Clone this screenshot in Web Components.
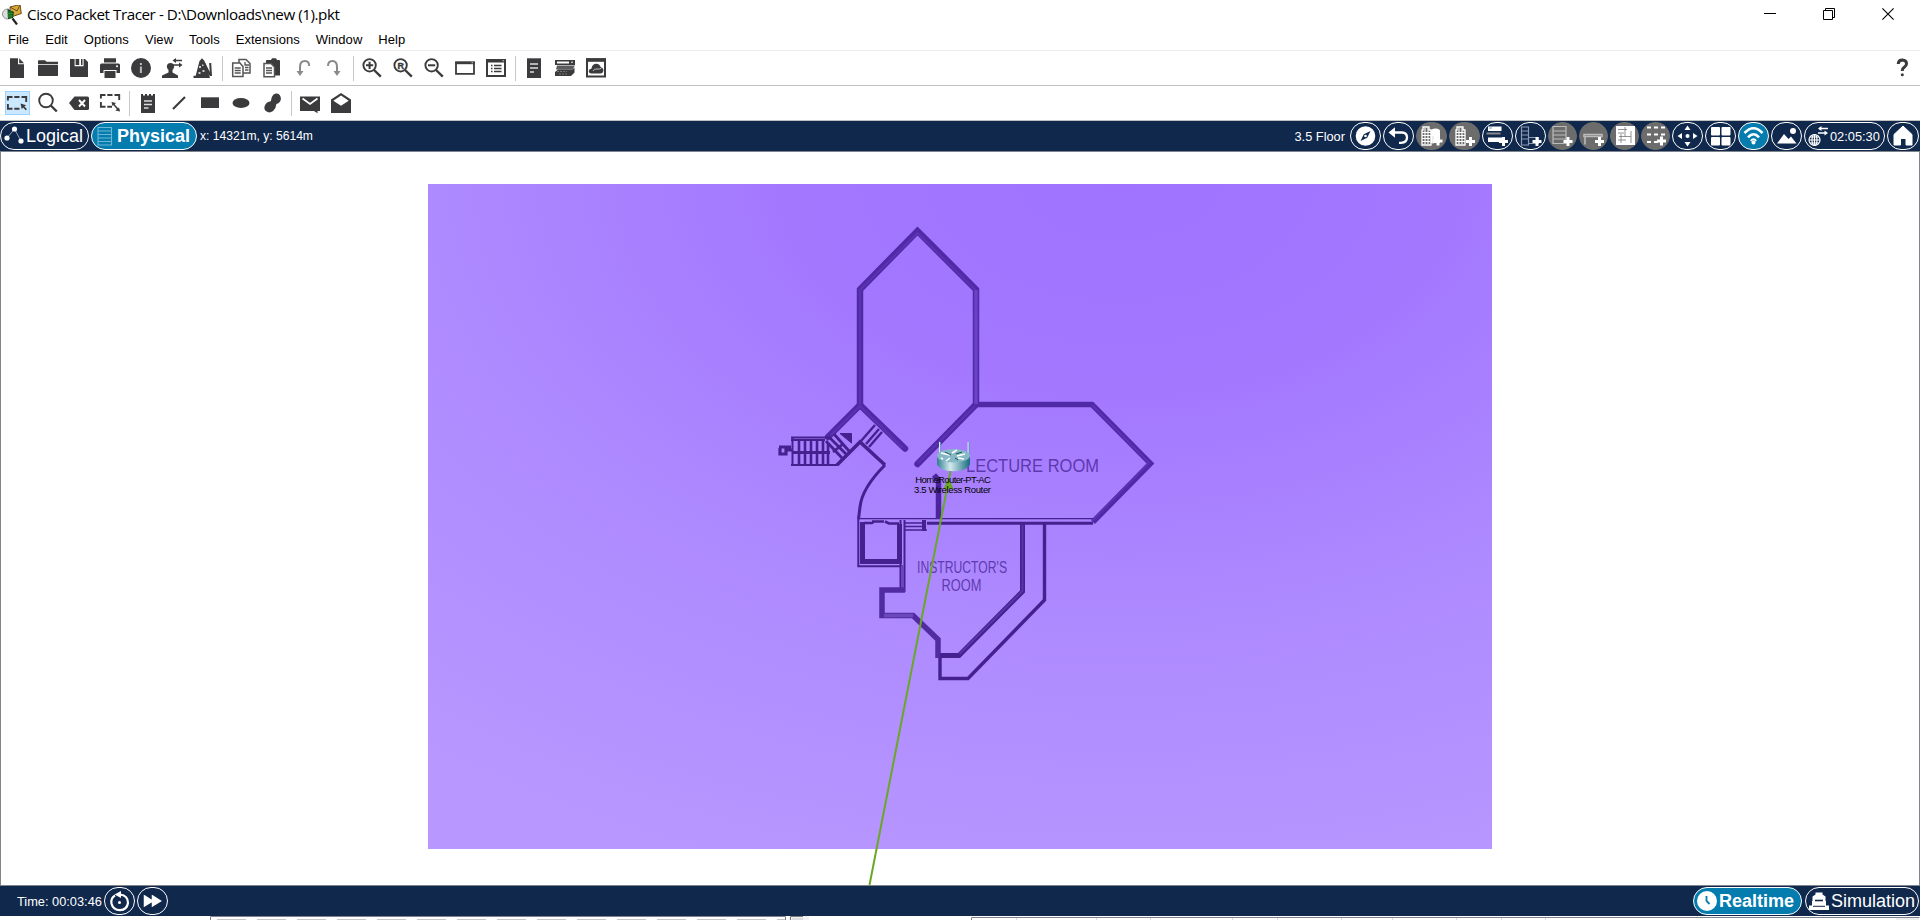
<!DOCTYPE html>
<html lang="en">
<head>
<meta charset="utf-8">
<title>Cisco Packet Tracer</title>
<style>
html, body { margin: 0; height: 100%; overflow: hidden; background: #fff; }
body { font-family: "Liberation Sans", Arial, sans-serif; }
</style>
</head>
<body>
<tracer-app></tracer-app>
<script>
const define = (name, css, html) => customElements.define(name, class extends HTMLElement {
  constructor() {
    super();
    const root = this.attachShadow({ mode: 'open' });
    const t = document.createElement('template');
    t.innerHTML = `<style>${css}</style>${typeof html === 'function' ? html(this) : html}`;
    root.append(t.content.cloneNode(true));
  }
});

/* 20x20 toolbar glyphs */
const K = '#3b3b3d';
const magnifier = inner => `<circle cx="7.6" cy="7.3" r="6.2" fill="none" stroke="${K}" stroke-width="1.9"/><path d="M12 12l6.8 6.6" stroke="${K}" stroke-width="2.4"/>${inner}`;
const ICONS = {
  new: `<path d="M3 .3h8v6h6V20H3z"/><path d="M12.2.3L17 5.2h-4.8z"/>`,
  open: `<path d="M0 3q0-.8.8-.8H7l1.6 1.6H20v2.4H0z"/><path d="M0 7h20v10.3q0 .7-.7.7H.7q-.7 0-.7-.7z"/>`,
  save: `<path d="M1 1h4.6v7.2h9V1H16l3 3v15H2q-1 0-1-1z"/><path d="M6.6 1h3.6v6H6.600zM12 1h1.500v6H12z"/>`,
  print: `<path d="M4 .3h12v4.300H4zM1.500 5.600h17q1.500 0 1.500 1.500V15h-3.500v-3h-13v3H0V7.100q0-1.500 1.500-1.500z"/><path d="M4.500 13h11v7h-11z"/><circle cx="17" cy="8.200" r="1" fill="#fff"/>`,
  info: `<circle cx="10" cy="10" r="10"/><path d="M8.900 8.500h2v6.500h-2zM8.900 5h2v2h-2z" fill="#bbb"/>`,
  user: `<circle cx="8.500" cy="8.500" r="3.600"/><path d="M0 20v-2.500l6.500-3V11h4v3.500l5.500 3V20z"/><path d="M12 2.500h8M11 7h7.500" stroke="${K}" stroke-width="1.400"/><path d="M10.500 2.500L14 0v5zM20.500 7L17 4.500v5z"/>`,
  cone: `<path d="M6.500 3L9 .3 11.500 3l5.500 17H.5v-2.300h2.200z"/><path d="M11.500 5.500l5.700 11.700M17.200 5l.8 13" stroke="${K}" stroke-width="2"/><path d="M6 8h2v2H6zM9 6.500h1.500V8H9zM9.500 12h2v2h-2zM5.500 14h2v2h-2z" fill="#ccc"/>`,
  copy: `<g fill="#fff" stroke="#555" stroke-width="1.500"><path d="M8 1.500h7l4 4V15H8z"/><path d="M1.700 5h7.300l3 3.500v10H1.700z"/></g><path d="M3.700 10h6M3.700 12.500h6M3.700 15h6M14 4v3h4M14 9.500h3.500M14 12h3.500" stroke="#555" stroke-width="1.300" fill="none"/>`,
  paste: `<path d="M4 3q0-1 1-1h4l1-1.700h4L15 2h2q1 0 1 1v14.500H4z"/><path d="M2 5.500h7l3.500 3.500v9.800H2z" fill="#fff" stroke="#555" stroke-width="1.500"/><path d="M4 10h6M4 12.500h6M4 15h6" stroke="#555" stroke-width="1.300"/>`,
  undo: `<path d="M16.200 8q0-5-4.300-5Q7 3 7 9v7" fill="none" stroke="#8a8a8a" stroke-width="2"/><path d="M3.500 13h7L7 18z" fill="#8a8a8a"/>`,
  redo: `<path d="M4 8q0-5 4.300-5Q13 3 13 9v7" fill="none" stroke="#8a8a8a" stroke-width="2"/><path d="M9.500 13h7L13 18z" fill="#8a8a8a"/>`,
  zin: magnifier(`<path d="M4 7.300h7.200M7.600 3.700v7.200" stroke="${K}" stroke-width="2"/>`),
  zreset: magnifier(`<text x="7.700" y="10.600" text-anchor="middle" font-size="9" font-weight="bold" stroke="${K}" stroke-width=".4" font-family="Liberation Sans">R</text>`),
  zout: magnifier(`<path d="M4 7.300h7.200" stroke="${K}" stroke-width="2"/>`),
  rectwin: `<path d="M1 4.500h18v11.300H1z" fill="#fff" stroke="${K}" stroke-width="1.800"/><path d="M.3 3.600h19.400v2.600H.3z"/><path d="M16.500 4.300h1.500v1h-1.500z" fill="#ccc"/>`,
  listwin: `<path d="M1 2h18v16H1z" fill="#fff" stroke="${K}" stroke-width="2"/><path d="M0 1h20v3.500H0z"/><path d="M5 7.500h1.500M8 7.500h7.500M5 10.500h1.500M8 10.500h7.500M5 13.500h1.500M8 13.500h7.500" stroke="${K}" stroke-width="1.600"/><path d="M16.500 2.200h1.500v1h-1.500z" fill="#ccc"/>`,
  doc: `<path d="M3 .3h14V20H3z"/><path d="M6 6h8M6 10h8M6 14h4" stroke="#ddd" stroke-width="1.500"/>`,
  devices: `<path d="M0 2h20v5H0z"/><path d="M2 3.500h12v2H2z" fill="#fff"/><path d="M16 3.500h2v1.500h-2z" fill="#bbb"/><path d="M2 7.500h18l-2.500 4H1z" fill="#5c5c5f"/><path d="M3 11.500h14.500l2-2v5L16 18H0v-4z"/><path d="M2 13.500h10M4 16h9" stroke="#888" stroke-width=".8" stroke-dasharray="2 1"/>`,
  cloudwin: `<path d="M1 1.200h18v17.300H1z" fill="#fff" stroke="${K}" stroke-width="2"/><path d="M0 .3h20v3.500H0z"/><path d="M5.500 15.500q-3-.3-2.700-2.700.4-2 2.600-2 .8-5 5-5 3.300 0 4.300 3.500 3.300.8 2.600 3.900-.5 2.200-3 2.300z"/><path d="M7 13q1-2.500 4-2t4.500-1" stroke="#bbb" fill="none"/>`,
  select: `<path d="M0 4h5.500M7.300 4h5.200M14.500 4h4.700v5M.9 4v3.500M.9 11v4.700h4.600M7.300 15.700h5.200" fill="none" stroke="${K}" stroke-width="1.900"/><path d="M13.500 10.500l5.800 1.800-2 1 2.700 3-1.300 1-2.600-2.700-1.300 1.700z"/>`,
  find: `<circle cx="8" cy="7.500" r="6.800" fill="none" stroke="${K}" stroke-width="1.900"/><path d="M12.800 12.500l6 6" stroke="${K}" stroke-width="2.400"/>`,
  del: `<path d="M0 10l5.500-6.500h13q1.500 0 1.500 1.500v10.500q0 1.500-1.500 1.500h-13z"/><path d="M10 7l6 6.500M16 7l-6 6.500" stroke="#fff" stroke-width="1.900"/>`,
  resize: `<path d="M0 2h5.500M7.300 2h5.200M14.500 2h4.700v5M.9 2v3.500M.9 9v4.700h4.600M7.300 13.700H12" fill="none" stroke="${K}" stroke-width="1.900"/><path d="M13 10.500l6 7" stroke="${K}" stroke-width="1.500"/><path d="M11.500 9l4.500 1-3.500 3zM20 18.500l-4.700-1 3.700-3z"/>`,
  note: `<path d="M3 1h2v1.500h2V1h2v1.500h2V1h2v1.500h2V1h2v19H3z"/><path d="M6 8h8M6 11.500h8M6 15h4.500" stroke="#ddd" stroke-width="1.500"/>`,
  line: `<path d="M4 16L16 4" stroke="${K}" stroke-width="2.200"/>`,
  rect: `<path d="M1 4.300h18v10.700H1z"/>`,
  ellipse: `<ellipse cx="10" cy="10" rx="8.500" ry="5"/>`,
  blob: `<path d="M11.500 1.500Q15-.5 17.700 2q2.300 3.500.2 6.800-1.300 1.800-3.500 2.200-.2 4-3.300 7-4.500 3-7.900-.4-2.300-4 1.600-7.900 2-1.300 4-1.500Q9.300 3.500 11.500 1.500z"/>`,
  mail: `<path d="M0 3.500h20V18h-2.500v2.300L14 18H0z"/><path d="M2.500 5.500L10 11l7.500-5.500" fill="none" stroke="#fff" stroke-width="1.700"/>`,
  mailopen: `<path d="M0 6.500L10 0l10 6.500V20H0z"/><path d="M2.300 7.700L10 2.500l7.700 5.200-7.700 5.100z" fill="#fff"/>`,
  help: `<path d="M6.200 6Q6.500 2 10.300 2q4.200.2 4.200 3.800 0 2-2.300 3.500-2 1.300-2 3.700" fill="none" stroke="${K}" stroke-width="3"/><circle cx="10.300" cy="16.700" r="1.500"/>`
};

/* glyphs for the navy bars, 31x28 */
const plus = (x, y) => `<path d="M${x - 4.5} ${y}h9M${x} ${y - 4.5}v9" stroke="#fff" stroke-width="3"/>`;
const building = (x, c) => `<path d="M${x + 1} 5h6v3h2v15h-9V8h1z" fill="none" stroke="${c}" stroke-width="1.300"/><path d="M${x} 10.500h9M${x} 13.500h9M${x} 16.500h9M${x} 19.500h9M${x + 3} 6v16M${x + 6} 6v16" stroke="${c}" stroke-width="1.100"/>`;
const PILL = {
  compass: `<circle cx="15.500" cy="14" r="9.800"/><path d="M20.500 9l-3.300 6.700L10.500 19l3.300-6.700z" fill="#0f284c"/><circle cx="15.500" cy="14" r="1.300"/>`,
  back: `<path d="M8 10.500h11q5 .3 5 5 0 5-6 5.300h-2" fill="none" stroke="#fff" stroke-width="2.300"/><path d="M5.500 10.500L12 5.300v10.400z"/>`,
  city: building(6, '#fff') + `<path d="M15 9q0-2.500 4.500-2.500T24 9v12h-9z"/><path d="M14.500 14v8M17 14v8" stroke="#ddd"/>` + plus(22, 19),
  bldg: building(7, '#fff') + plus(21.500, 19.500),
  rackdev: `<path d="M6 4.500h13.500V9H6zM6 15.500h14V20H6z"/><path d="M4.500 11.500h14" stroke="#888" stroke-width="2"/><path d="M7 6h3" stroke="#8294b0"/>` + plus(21.500, 19.500),
  rack: `<path d="M6.500 5h7v18h-7zM6.500 9h7M6.500 13h7M6.500 17h7M13.500 15.500h10v6h-10" fill="none" stroke="#8c9ab3" stroke-width="1.200"/>` + plus(22, 19.500),
  rackg: `<path d="M5 4.500h13v17H5zM5 9h13M5 13h13M5 17h13" fill="none" stroke="#bbb" stroke-width="1.200"/>` + plus(20, 19.500),
  table: `<path d="M5 12.500h18v2H5zM6 14.500v8M21 14.500v8" fill="none" stroke="#bbb" stroke-width="1.600"/>` + plus(20.500, 19.500),
  sheet: `<path d="M6 4h19v19H6z"/><path d="M8 7.500h9M8 11h6M9 14.500h12M8 18h8M15 5v10M21 9v12M11 12v9" stroke="#777" stroke-width=".8"/>`,
  grid: `<path d="M6 5.500h19M6 12.500h19M6 20h12" stroke="#fff" stroke-width="2.200" stroke-dasharray="4 3"/>` + plus(20.500, 19),
  move: `<circle cx="15.500" cy="14" r="2"/><path d="M15.500 3.500l3 4.500h-6zM15.500 24.500l3-4.500h-6zM5.500 14l4.500-3v6zM25.500 14L21 11v6z"/>`,
  tiles: `<rect x="6" y="5" width="9" height="8.500" rx="1"/><rect x="16.500" y="5" width="9" height="8.500" rx="1"/><rect x="6" y="15" width="9" height="8.500" rx="1"/><rect x="16.500" y="15" width="9" height="8.500" rx="1"/>`,
  wifi: `<g fill="none" stroke="#fff" stroke-width="2.600"><path d="M6.500 11q9-9.500 18 0M10 15.300q5.500-6 11 0"/><path d="M12.800 18.800q2.700-3 5.400 0" stroke-width="2"/></g><circle cx="15.500" cy="20.500" r="2"/>`,
  photo: `<path d="M6 21.500l7-9.500 4.500 5 2.500-2.500 5.500 7z"/><circle cx="22" cy="9" r="3"/>`,
  home: `<path d="M7 12.500L16 4l9 8.500V23h-6v-6.500h-5.500V23H7z" stroke="#fff" stroke-linejoin="round"/>`,
  reset: `<path d="M11 8.500q-4.500 2.500-3.500 8 1.500 6.500 8.500 6.700 7-.5 8-7.200Q24 8.500 16 7.500" fill="none" stroke="#fff" stroke-width="2.200"/><path d="M10.500 7.500l6.500-3.500v7z"/><circle cx="15.500" cy="15.500" r="1.500"/>`,
  ff: `<path d="M7.500 9l8 5-8 5zM15.500 9l8 5-8 5z" stroke="#fff" stroke-width="1.500"/>`
};

define('tool-icon', `
:host { display: block; flex: none; width: 20px; height: 20px; padding: 2px 5px 2px 6px; position: relative; z-index: 0; }
:host([active])::before { content: ""; position: absolute; z-index: -1; left: 4px; top: 0; width: 23px; height: 22px; border: 1px solid #99d1ff; background: #cce8ff; }
svg { display: block; overflow: visible; fill: ${K}; }`,
  el => `<svg width="20" height="20" viewBox="0 0 20 20">${ICONS[el.getAttribute('name')]}</svg>`);

define('tool-sep', `:host { display: block; flex: none; width: 1px; height: 25px; margin: 0 2px 0 4px; background: #c8c8c8; }`, '');

define('tool-bar', `:host { display: flex; align-items: center; height: 34px; padding: 0 1px; border-bottom: 1px solid #c0c0c0; }
::slotted([name=help]) { margin-left: auto; margin-right: 2px; }`, `<slot></slot>`);

define('app-title', `
:host { display: flex; align-items: center; height: 29px; padding: 0 10px 0 2px; color: #000; }
.t { font: 15.200px/20px "Open Sans", "Noto Sans", sans-serif; white-space: nowrap; margin-left: 5px; flex: 1; padding-bottom: 2px; }
.t span { display: inline-block; letter-spacing: -.440px; }
svg { display: block; }
.win { display: flex; gap: 47px; margin-right: 16px; padding-bottom: 1px; }`, `
<svg width="20" height="20" viewBox="0 0 20 20"><path d="M8 2l10-2.500 1.300 9L9 12z" fill="#d8a93a" stroke="#6b4b12"/><path d="M8 2l7 4 3-6" fill="none" stroke="#6b4b12"/><circle cx="5.500" cy="9" r="5" fill="#d9dedb" stroke="#8d9492"/><path d="M5.500 4l6.500 3-1 6-5 1z" fill="#123c16"/><path d="M7 6v7M9 6v7M5.500 8.500h6M5.500 11h6" stroke="#2fa33a" stroke-width=".8"/><path d="M10.500 13.500l4.500 6" stroke="#222" stroke-width="2.200"/></svg>
<div class="t"><span><slot></slot></span></div>
<div class="win"><svg width="12" height="12"><path d="M0 5.500h12" stroke="#000"/></svg>
<svg width="12" height="12"><path d="M.5 2.500h9v9h-9zM2.500 2.500v-2h9v9h-2" fill="none" stroke="#000"/></svg>
<svg width="12" height="12"><path d="M.4.4l11.200 11.200M11.600.4L.4 11.600" stroke="#000" stroke-width="1.100"/></svg></div>`);

define('menu-row', `:host { display: flex; gap: 16px; height: 21px; padding-left: 8px; line-height: 22px; font-size: 13px; letter-spacing: .050px; border-bottom: 1px solid #ececec; color: #000; }`, `<slot></slot>`);

define('nav-pill', `
:host { box-sizing: border-box; display: flex; flex: none; align-items: center; width: 31px; height: 28px; border: 1px solid #fff; border-radius: 14px; color: #fff; white-space: nowrap; }
:host([gray]) { background: #6c6c6c; border-color: #6c6c6c; }
:host([small]) { width: 29px; }
:host([on]) { background: #047cae; }
svg { display: block; flex: none; margin: -1px; fill: #fff; overflow: visible; }`,
  el => (PILL[el.getAttribute('icon')] ? `<svg width="31" height="28" viewBox="0 0 31 28">${PILL[el.getAttribute('icon')]}</svg>` : '') + `<slot></slot>`);

define('nav-bar', `
:host { display: flex; align-items: center; gap: 2px; height: 30px; background: #0f284c; color: #fff; font-size: 12.800px; box-sizing: border-box; }
::slotted(svg) { display: block; flex: none; }`, `<slot></slot>`);

define('floor-canvas', `:host { display: block; box-sizing: border-box; height: 735px; border: 1px solid #80848c; }
svg { display: block; }
text { font-family: "Liberation Sans", Arial, sans-serif; }`, `
<svg width="1918" height="733" viewBox="1 152 1918 733">
<defs>
<radialGradient id="tint" gradientUnits="userSpaceOnUse" cx="0" cy="0" r="1" gradientTransform="translate(1120 170) scale(1120 740)"><stop offset="0" stop-color="#9f73ff"/><stop offset=".3" stop-color="#a378ff"/><stop offset=".62" stop-color="#ae8aff"/><stop offset="1" stop-color="#b897ff"/></radialGradient>
<linearGradient id="metal"><stop offset="0" stop-color="#2f7f92"/><stop offset=".4" stop-color="#d5eaee"/><stop offset="1" stop-color="#176b80"/></linearGradient>
</defs>
<path d="M428 184h1064v665H428z" fill="url(#tint)"/>
<g fill="none" stroke-linejoin="miter">
<g stroke="#5029a6" stroke-width="6.500">
<path d="M860 406V289.500L917.500 231l58.500 58.500V405"/>
<path d="M828 437l32-32 45 43.500M976 404.500L917.500 464" stroke-linecap="round"/>
<path d="M976 404.500h116l58.500 59L1093 522" stroke-width="5.500"/></g>
<g stroke="#5a33b3" stroke-width="2.500">
<path d="M860 404V290L917.500 233l58.500 57.500V404M831 435l29-29 43 42M975 406L918 463M1092 405l57 58-57 58" stroke-width="2"/>
<path d="M976 290v114" stroke="#6a42c6" stroke-width="3.500"/></g>
<g stroke="#45208f">
<path d="M857.500 518.600H1093" stroke-width="1.400"/><path d="M927 523.300h166" stroke-width="3"/>
<path d="M934 475l4.500 5V519" stroke-width="5.500" stroke="#4c259c"/>
<path d="M837 465l23-23 25 23" stroke-width="3.500"/>
<path d="M885 465Q862 488 860 507l-1.500 12" stroke-width="3"/>
<path d="M791 437.500h38M791 440h34M791 465h46l22-22" stroke-width="1.800"/>
<path d="M792.500 437v28" stroke-width="2"/>
<path d="M799 441v24M805 441v24M811 441v24M817 441v24M823 441v24M828 443v22" stroke-width="2.600"/>
<path d="M792 452.500h38M779 447h12M780 448v6h6v-4h6" stroke-width="3.200"/>
<path d="M829 437l17 17M834 434l15 17M826 441l16 17M833 452l10-8" stroke-width="2.800"/>
<path d="M840 433.500h11.500V443z" fill="#45208f" stroke-width="1"/>
<path d="M875 425l-14 16M879 429l-13 15M882 432l-13 15" stroke-width="2.400"/>
<path d="M858.300 519v47.300H903" stroke-width="2"/>
<path d="M862.500 522v39.500h37V524" stroke-width="5"/><path d="M864 523h8l2-1.500M872 521.500h12M885 521.500l4 2h10" stroke-width="2.600"/>
<path d="M900.500 520v71M904.500 520v72" stroke-width="2"/><path d="M902.500 566v25" stroke-width="3" stroke="#6a45bd"/>
<path d="M905 523h18M905 526.500h18M905 530h22" stroke-width="1.500"/><path d="M924 520v11" stroke-width="4"/>
<path d="M905 590h-23v25.500h31l25 24V658" stroke-width="5.500" stroke="#512ba0"/>
<path d="M884 615.500h29" stroke-width="3.500" stroke="#6c48bd"/>
<path d="M940 655.500h19l63.500-64V524" stroke-width="5"/><path d="M1022.500 525v66l-63 63" stroke-width="1.800" stroke="#5a36aa"/>
<path d="M940 658v20.500h28l76.500-78.500V524" stroke-width="3.400"/>
</g></g>
<g fill="#4a2597" fill-opacity=".8">
<text x="966" y="472.300" font-size="19.200" textLength="133" lengthAdjust="spacingAndGlyphs">LECTURE ROOM</text>
<text x="917" y="572.700" font-size="17" textLength="90" lengthAdjust="spacingAndGlyphs">INSTRUCTOR'S</text>
<text x="941.500" y="590.500" font-size="16.500" textLength="40" lengthAdjust="spacingAndGlyphs">ROOM</text></g>
<path d="M950.500 471L869.500 885" stroke="#69a824" stroke-width="2"/>
<path d="M948.500 477l5 12h-10z" fill="#69a824"/>
<path d="M939.700 442v14M968.300 442v14" stroke="#d9f0f2" stroke-width="1.400"/><path d="M940.600 442v14M969 442v14" stroke="#3c97a5" stroke-width=".7"/>
<path d="M937 455.500v9q3 6.700 16.500 6.700T970 464.500v-9z" fill="url(#metal)"/>
<ellipse cx="953.500" cy="455.700" rx="16.500" ry="6.700" fill="#86b9c5"/>
<path d="M941 453l9 2M943 459l-2-1M957 450l-5 3M965 454l-8 2M950 458l-4 3M958 458l6 1" stroke="#fff" stroke-width="1.500"/><path d="M945 452l6 3M962 452l-6 2M958 460l-3-2" stroke="#1c5260" stroke-width="1"/>
<g font-size="9.500" fill="#000"><text x="915.300" y="482.700" textLength="75.500">HomeRouter-PT-AC</text><text x="914" y="492.700" textLength="77">3.5 Wireless Router</text></g>
</svg>`);

define('panel-edges', `
:host { display: block; height: 4px; overflow: hidden; background: #fff; }
svg { display: block; }`, `
<svg width="1920" height="4"><path d="M210.500 4V.5h575V4" fill="none" stroke="#80838c"/><path d="M217 3.500h568" stroke="#c6c6c6" stroke-dasharray="29 11"/>
<path d="M789 0h20v4h-20z" fill="#f1f1f1"/><path d="M790.500 4V.5H803" fill="none" stroke="#777"/><path d="M792 2h11v2h-11z" fill="#ddd"/>
<path d="M971.500 4V1.500h948" fill="none" stroke="#80838c"/><path d="M1896 2h23v2h-23z" fill="#eee"/>
<path d="M1016.500 2v2M1096.500 2v2M1150.500 2v2M1232.500 2v2M1277.500 2v2M1341.500 2v2M1392.500 2v2M1456.500 2v2M1501.500 2v2M1545.500 2v2" stroke="#ddd"/></svg>`);

const tools = s => s.split(' ').map(n => n === '|' ? '<tool-sep></tool-sep>' : `<tool-icon name="${n}"${n === 'select' ? ' active' : ''}></tool-icon>`).join('');

define('tracer-app', `
:host { display: flex; flex-direction: column; width: 1920px; height: 920px; background: #fff; }
:host > * { flex: none; }
.top { height: 30px; padding-right: 1px; }
.bottom { padding: 0 1px 0 17px; }
.big { font-size: 18px; }
.log { width: 89px; } .phy { width: 106px; font-weight: bold; margin-right: 1px; }
.rt { width: 109px; font-weight: bold; } .sim { width: 114px; }
.clock { width: 81px; }
.xy { font-size: 12.100px; flex: 1; }
.floor { margin-right: 3px; }
.grow { flex: 1; }
.bottom .big { margin: 0 0 0 1px; }
i { display: block; flex: none; } i svg { display: block; }`, `
<app-title>Cisco Packet Tracer - D:\\Downloads\\new (1).pkt</app-title>
<menu-row><span>File</span><span>Edit</span><span>Options</span><span>View</span><span>Tools</span><span>Extensions</span><span>Window</span><span>Help</span></menu-row>
<tool-bar>${tools('new open save print info user cone | copy paste undo redo | zin zreset zout rectwin listwin | doc devices cloudwin help')}</tool-bar>
<tool-bar>${tools('select find del resize | note line rect ellipse blob | mail mailopen')}</tool-bar>
<nav-bar class="top">
<nav-pill class="big log"><i><svg width="25" height="26"><path d="M6 15l7.500-9L20 18" stroke="#8fa0bb" fill="none"/><g fill="#fff"><circle cx="6" cy="15" r="2.600"/><circle cx="13.500" cy="6" r="2.600"/><circle cx="20" cy="18" r="2.600"/></g></svg></i>Logical</nav-pill>
<nav-pill class="big phy" on><i><svg width="25" height="26"><path d="M6 4.500h13.500v17.500H6zM6 8h13.500M6 11.500h13.500M6 15h13.500M6 18.500h13.500" fill="none" stroke="#6db6d6" stroke-width="1.100"/></svg></i>Physical</nav-pill>
<span class="xy">x: 14321m, y: 5614m</span>
<span class="floor">3.5 Floor</span>
<nav-pill icon="compass"></nav-pill><nav-pill icon="back"></nav-pill><nav-pill icon="city" gray></nav-pill><nav-pill icon="bldg" gray></nav-pill><nav-pill icon="rackdev"></nav-pill><nav-pill icon="rack"></nav-pill>
<nav-pill icon="rackg" gray small></nav-pill><nav-pill icon="table" gray small></nav-pill><nav-pill icon="sheet" gray small></nav-pill><nav-pill icon="grid" gray small></nav-pill>
<nav-pill icon="move"></nav-pill><nav-pill icon="tiles"></nav-pill><nav-pill icon="wifi" on></nav-pill><nav-pill icon="photo"></nav-pill>
<nav-pill class="clock"><i><svg width="25" height="26"><g fill="none" stroke="#fff" stroke-width="1.200"><circle cx="9.500" cy="17" r="5.500"/><ellipse cx="9.500" cy="17" rx="2.500" ry="5.500"/><path d="M4 17h11M5 14h9M5 20h9M9.500 11.500v11"/><path d="M14 5.500h9M13 10h8" stroke-width="1.600"/></g><path d="M13 5.500L16.500 3v5zM23 10l-3.500-2.500v5z" fill="#fff"/></svg></i>02:05:30</nav-pill>
<nav-pill icon="home" style="width:32px"></nav-pill>
</nav-bar>
<floor-canvas></floor-canvas>
<nav-bar class="bottom"><span>Time: 00:03:46</span><nav-pill icon="reset"></nav-pill><nav-pill icon="ff"></nav-pill><span class="grow"></span>
<nav-pill class="big rt" on><i><svg width="25" height="26"><circle cx="13" cy="13" r="10" fill="#fff"/><path d="M12.500 8v5l3 3" fill="none" stroke="#047cae" stroke-width="1.800"/></svg></i>Realtime</nav-pill>
<nav-pill class="big sim"><i><svg width="25" height="26"><path d="M9.500 4.500h7v2l3 2V13h.5v4.500h3V22H3v-4.500h3V13h.500V8.500l3-2z" fill="#fff"/><path d="M9 12.500h8" stroke="#0f284c" stroke-width="1.600"/><path d="M7 18.300h12" stroke="#0f284c" stroke-width="1"/></svg></i>Simulation</nav-pill>
</nav-bar>
<panel-edges></panel-edges>`);
</script>
</body>
</html>
